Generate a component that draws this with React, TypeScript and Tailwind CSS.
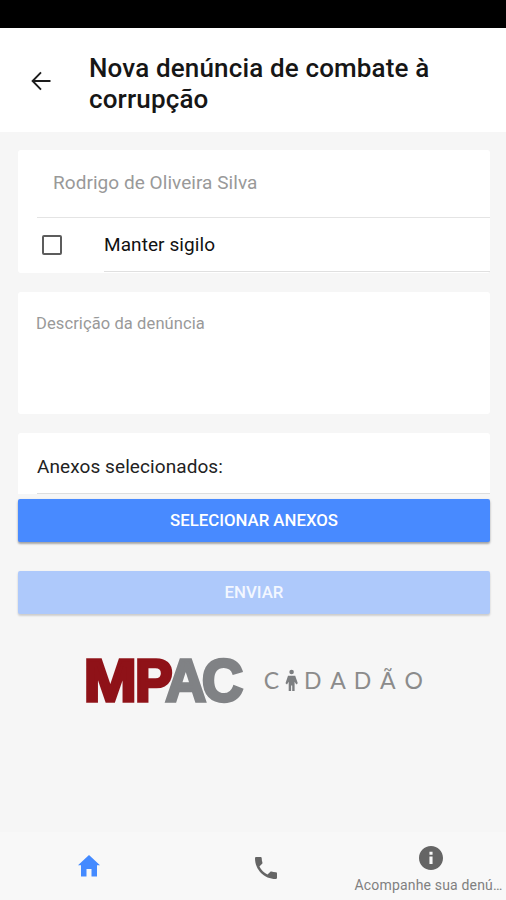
import { useState } from "react";

const PERSON_PATH =
  "M288 675.800h7.200l2.600 7.500-1.500 1.200-1.700-2.800v9.300h-2.400v-5.500h-1.100v5.500h-2.400v-9.300l-1.700 2.800-1.500-1.200z";

function Header() {
  return (
    <header className="flex h-[104px] items-center bg-white pl-[31px]">
      <button type="button" aria-label="Voltar" className="w-[58px] shrink-0">
        <svg width="20" height="20" viewBox="0 0 20 20" fill="none" stroke="#1c1c1c" strokeWidth="1.9" className="mt-[2px]">
          <path d="M19.500 10H2M10 1.300L1.600 10 10 18.700" />
        </svg>
      </button>
      <h1 className="w-[370px] pt-[8px] text-[26px] leading-[31.500px] font-medium tracking-[0.15px] text-[#161616]">
        Nova denúncia de combate à corrupção
      </h1>
    </header>
  );
}

function Logo() {
  return (
    <svg
      width="350"
      height="90"
      viewBox="80 635 350 90"
      className="ml-[80px] block"
      role="img"
      aria-label="MPAC Cidadão"
    >
      <g fontFamily="Liberation Sans, sans-serif" fontWeight="700" fontSize="59.500" strokeWidth="3.4">
        <g fill="#8f1218" stroke="#8f1218">
          <text x="83.800" y="700.500" textLength="53" lengthAdjust="spacingAndGlyphs">M</text>
          <text x="135" y="700.500" textLength="37.500" lengthAdjust="spacingAndGlyphs">P</text>
        </g>
        <g fill="#808285" stroke="#808285">
          <text x="165.500" y="700.500" textLength="40.500" lengthAdjust="spacingAndGlyphs">A</text>
          <text x="202" y="700.500" textLength="41" lengthAdjust="spacingAndGlyphs">C</text>
        </g>
      </g>
      <g fontFamily="Lato, sans-serif" fontSize="23" fill="#8b8b8b">
        <text x="263.800" y="689">C</text>
        <text x="304" y="689">D</text>
        <text x="330.300" y="689">A</text>
        <text x="353.800" y="689">D</text>
        <text x="380" y="689">Ã</text>
        <text x="404.500" y="689">O</text>
      </g>
      <g fill="#7c7e80">
        <circle cx="291.600" cy="672" r="2.300" />
        <path d={PERSON_PATH} />
      </g>
    </svg>
  );
}

function TabBar() {
  return (
    <nav className="grid h-[68px] grid-cols-[178px_175px_153px] bg-[#f8f8f8] text-[#656565]">
      <button type="button" aria-label="Início" className="flex justify-center pt-[23px]">
        <svg width="22" height="22" viewBox="0 0 22 22" fill="#448aff">
          <path d="M11 0L22 10.200h-3V21.500h-5.500v-7.500h-5v7.500H3V10.200H0z" />
        </svg>
      </button>
      <button type="button" aria-label="Telefone" className="flex justify-center pt-[25px]">
        <svg width="22" height="22" viewBox="3 3 18 18" fill="currentColor">
          <path d="M6.620 10.790c1.440 2.830 3.760 5.140 6.590 6.590l2.200-2.200c.27-.27.67-.36 1.020-.24 1.120.37 2.330.57 3.570.57.55 0 1 .45 1 1V20c0 .55-.45 1-1 1-9.390 0-17-7.610-17-17 0-.55.45-1 1-1h3.500c.55 0 1 .45 1 1 0 1.250.2 2.450.57 3.570.11.35.03.74-.25 1.020z" />
        </svg>
      </button>
      <button type="button" className="flex flex-col items-center pt-[14px]">
        <svg width="24" height="24" viewBox="2 2 20 20" fill="currentColor" className="ml-[3px]">
          <path d="M12 2C6.480 2 2 6.480 2 12s4.480 10 10 10 10-4.480 10-10S17.520 2 12 2zm1.300 15h-2.600v-6.300h2.600zm0-7.700h-2.600V6.800h2.600z" />
        </svg>
        <span className="mt-[7px] pr-[2px] text-[14px] leading-[16px] tracking-[0.17px] whitespace-nowrap text-[#808080]">
          Acompanhe sua denú…
        </span>
      </button>
    </nav>
  );
}

export default function App() {
  const [sigilo, setSigilo] = useState(false);
  const [descricao, setDescricao] = useState("");

  return (
    <div className="flex h-[900px] w-[506px] flex-col overflow-hidden bg-[#f6f6f6] font-['Roboto',sans-serif]">
      <div className="h-7 shrink-0 bg-black" />
      <Header />

      <main className="flex-1">
        <div className="pt-[18px] pr-[16px] pl-[18px]">
          <section className="h-[123px] rounded-[3px] bg-white">
            <div className="ml-[19px] flex h-[68px] items-center border-b border-[#e4e4e4] pl-[16px] text-[19px] tracking-[0.05px] text-[#999]">
              Rodrigo de Oliveira Silva
            </div>
            <label className="flex h-[54px] items-center pl-[24px]">
              <input
                type="checkbox"
                checked={sigilo}
                onChange={(e) => setSigilo(e.target.checked)}
                className="size-[20px] appearance-none rounded-[2px] border-2 border-[#5c5c5c] checked:bg-[#448aff]"
              />
              <span className="ml-[42px] flex h-full flex-1 items-center border-b border-[#e0e0e0] pt-[1px] text-[19px] tracking-[0.08px] text-[#111]">
                Manter sigilo
              </span>
            </label>
          </section>

          <section className="mt-[19px] h-[122px] rounded-[3px] bg-white px-[18px] pt-[21px]">
            <textarea
              value={descricao}
              onChange={(e) => setDescricao(e.target.value)}
              placeholder="Descrição da denúncia"
              className="block h-[80px] w-full resize-none text-[16.500px] leading-[22px] tracking-[0.1px] outline-none placeholder:text-[#999]"
            />
          </section>

          <section className="mt-[19px] h-[61px] rounded-t-[3px] bg-white pl-[19px]">
            <div className="flex h-full items-center border-b border-[#dedede] pt-[8px] text-[19px] tracking-[0.08px] text-[#222]">
              Anexos selecionados:
            </div>
          </section>

          <button
            type="button"
            className="mt-[5px] block h-[43px] w-full rounded-[2px] bg-[#488aff] pt-[1px] text-[16.800px] font-medium text-white shadow-[0_2px_2px_rgba(0,0,0,0.25),0_1px_3px_rgba(0,0,0,0.15)]"
          >
            SELECIONAR ANEXOS
          </button>
          <button
            type="button"
            disabled
            className="mt-[29px] block h-[43px] w-full rounded-[2px] bg-[#aec9fb] pt-[1px] text-[16.800px] font-medium text-[#f3f7ff] shadow-[0_2px_2px_rgba(0,0,0,0.12),0_1px_3px_rgba(0,0,0,0.08)]"
          >
            ENVIAR
          </button>
        </div>
        <div className="pt-[21px]">
          <Logo />
        </div>
      </main>

      <TabBar />
    </div>
  );
}
